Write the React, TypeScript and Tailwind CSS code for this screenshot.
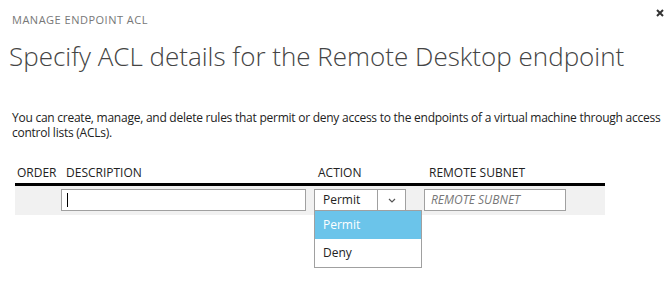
import React from 'react';

const App = () => {
  return (
    <div className="relative w-[670px] h-[300px] bg-white overflow-hidden font-['Open_Sans',sans-serif] text-[#222]">
      <button className="absolute top-[6px] right-[3px] w-[14px] h-[14px] flex items-center justify-center">
        <svg width="8" height="8" viewBox="0 0 8 8">
          <path d="M1 1 L7 7 M7 1 L1 7" stroke="#333" strokeWidth="2" />
        </svg>
      </button>

      <div className="pl-[12px] pt-[12px] text-[11px] leading-[16px] text-[#777] tracking-[0.5px]">MANAGE ENDPOINT ACL</div>
      <h1 className="pl-[9px] mt-[12px] text-[26px] leading-[32px] font-light text-[#444]">
        Specify ACL details for the Remote Desktop endpoint
      </h1>
      <p className="pl-[12px] pr-[6px] mt-[38px] text-[12px] leading-[15px] tracking-[-0.25px] text-[#222]">
        You can create, manage, and delete rules that permit or deny access to the endpoints of a virtual machine through access control lists (ACLs).
      </p>

      <div className="ml-[15px] mt-[22px] w-[590px]">
        <div className="grid grid-cols-[46px_253px_110px_181px] h-[24px] items-center text-[12px] text-[#222] border-b-[3px] border-black">
          <div className="pl-[2px]">ORDER</div>
          <div className="pl-[5px]">DESCRIPTION</div>
          <div className="pl-[4px]">ACTION</div>
          <div className="pl-[5px]">REMOTE SUBNET</div>
        </div>
        <div className="grid grid-cols-[46px_253px_110px_181px] h-[29px] pt-[3px] bg-[#f1f1f1]">
          <div />
          <div>
            <div className="w-[245px] h-[22px] border border-[#a0a0a0] bg-white flex items-center pl-[5px]">
              <span className="w-px h-[14px] bg-black" />
            </div>
          </div>
          <div className="relative">
            <div className="w-[92px] h-[22px] border border-[#a0a0a0] bg-white flex text-[12px]">
              <div className="flex-1 flex items-center pl-[8px] border-r border-[#a0a0a0]">Permit</div>
              <div className="w-[27px] flex items-center justify-center">
                <svg width="8" height="5" viewBox="0 0 8 5">
                  <path d="M1 1 L4 4 L7 1" stroke="#555" strokeWidth="1.2" fill="none" />
                </svg>
              </div>
            </div>
            <div className="absolute left-0 top-[21px] w-[108px] border border-[#a0a0a0] bg-white text-[12px] z-10">
              <div className="h-[28px] flex items-center pl-[8px] bg-[#6bc4ea] text-white">Permit</div>
              <div className="h-[28px] flex items-center pl-[8px] text-[#222]">Deny</div>
            </div>
          </div>
          <div>
            <div className="w-[142px] h-[22px] border border-[#a0a0a0] bg-white flex items-center pl-[6px] text-[12px] italic text-[#777]">
              REMOTE SUBNET
            </div>
          </div>
        </div>
      </div>
    </div>
  );
};

export default App;
